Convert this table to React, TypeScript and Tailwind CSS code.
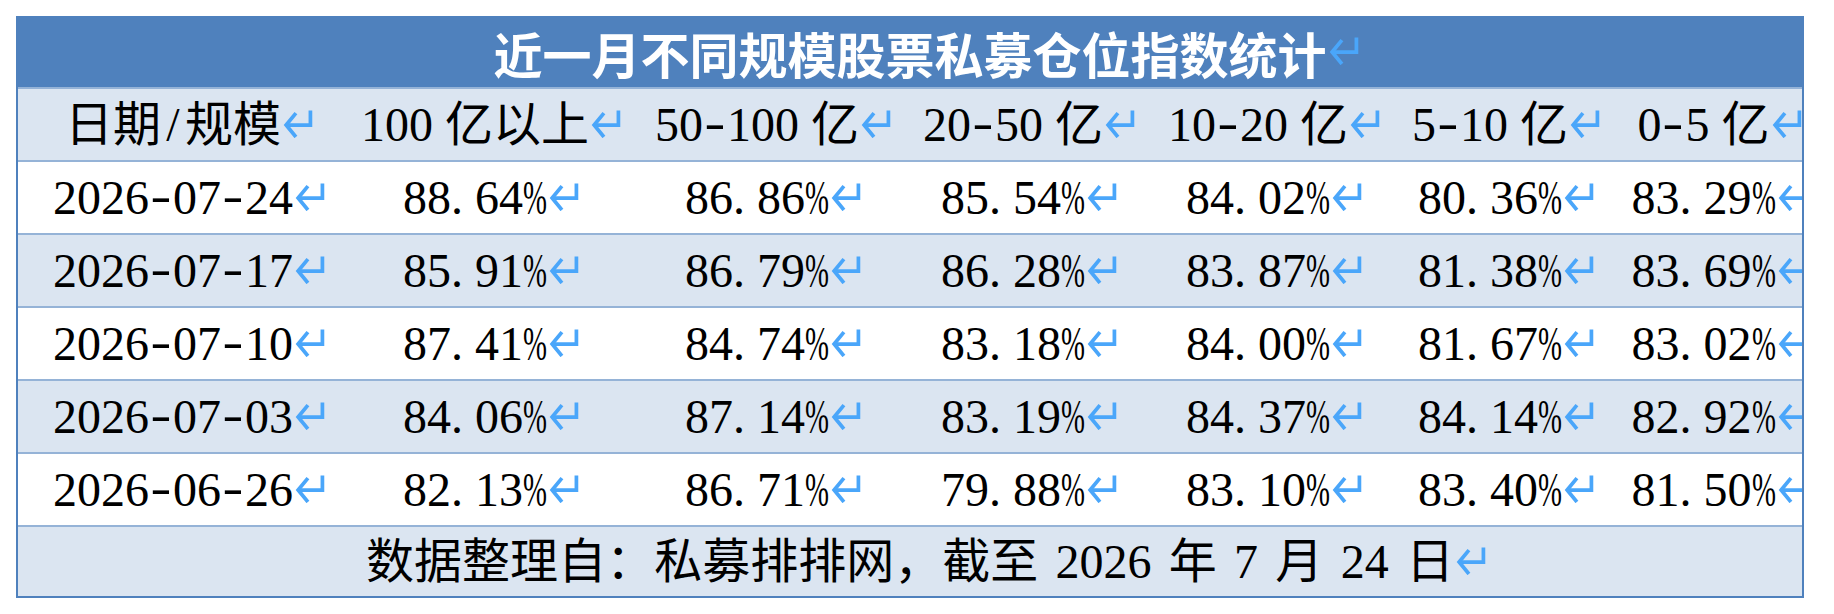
import type { ReactNode } from 'react'

const HEADERS: [string, string][] = [
  ['100', '亿以上'],
  ['50-100', '亿'],
  ['20-50', '亿'],
  ['10-20', '亿'],
  ['5-10', '亿'],
  ['0-5', '亿'],
]

const ROWS = [
  ['2026-07-24', '88.64%', '86.86%', '85.54%', '84.02%', '80.36%', '83.29%'],
  ['2026-07-17', '85.91%', '86.79%', '86.28%', '83.87%', '81.38%', '83.69%'],
  ['2026-07-10', '87.41%', '84.74%', '83.18%', '84.00%', '81.67%', '83.02%'],
  ['2026-07-03', '84.06%', '87.14%', '83.19%', '84.37%', '84.14%', '82.92%'],
  ['2026-06-26', '82.13%', '86.71%', '79.88%', '83.10%', '83.40%', '81.50%'],
]

// Word paragraph mark
function Ret() {
  return (
    <svg
      viewBox="0 0 29 28"
      fill="none"
      stroke="#4aa6fa"
      strokeWidth={3.6}
      className="absolute left-full top-[8px] ml-[2px] h-[29px] w-[30px]"
    >
      <path d="M26.5 1.5v14H3.5" />
      <path d="M12.5 4 3 15.5 12.5 27" />
    </svg>
  )
}

function Num({ text }: { text: string }) {
  return (
    <>
      {text.split('').map((c, i) => {
        if (c === '.') return <span key={i} className="inline-block w-[0.5em]">.</span>
        if (c === '%')
          return (
            <span key={i} className="inline-block w-[0.5em]">
              <span className="inline-block origin-left scale-x-[0.6]">%</span>
            </span>
          )
        if (c === '-')
          return (
            <span key={i} className="inline-block w-[0.5em] text-center">
              <span className="inline-block -translate-y-[2px] scale-x-[1.3]">-</span>
            </span>
          )
        if (c === '/') return <span key={i} className="inline-block w-[0.5em] text-center">/</span>
        if (c === ' ') return <span key={i} className="inline-block w-[0.36em]" />
        return <span key={i}>{c}</span>
      })}
    </>
  )
}

function Cell({ children, last }: { children: ReactNode; last?: boolean }) {
  return (
    <div className={last ? 'flex items-center justify-center pl-[7px]' : 'flex items-center justify-center'}>
      <span className="relative whitespace-nowrap leading-[48px]">
        {children}
        <Ret />
      </span>
    </div>
  )
}

const ROW = 'grid h-[73px] grid-cols-[310px_294px_270px_242px_248px_216px_1fr] border-t-2 border-[#95b3d7]'

export default function App() {
  return (
    <div className="min-h-[614px] bg-white pl-4 pt-4">
      <div className="w-[1788px] overflow-hidden border-2 border-[#4f81bd] font-['Liberation_Serif','Noto_Sans_CJK_SC',serif] text-[48px] text-black">
        <div className="flex h-[69px] items-center justify-center bg-[#4f81bd] text-white">
          <span className="relative whitespace-nowrap font-['Noto_Sans_CJK_SC',sans-serif] text-[49px] font-bold leading-[49px]">
            近一月不同规模股票私募仓位指数统计
            <Ret />
          </span>
        </div>

        <div className={`${ROW} bg-[#dbe5f1]`}>
          <Cell>
            <Num text="日期/规模" />
          </Cell>
          {HEADERS.map(([n, unit], i) => (
            <Cell key={n} last={i === HEADERS.length - 1}>
              <Num text={n} />
              <span className="ml-3">{unit}</span>
            </Cell>
          ))}
        </div>

        {ROWS.map((row, r) => (
          <div key={row[0]} className={`${ROW} ${r % 2 === 1 ? 'bg-[#dbe5f1]' : 'bg-white'}`}>
            {row.map((v, i) => (
              <Cell key={i} last={i === row.length - 1}>
                <Num text={v} />
              </Cell>
            ))}
          </div>
        ))}

        <div className="flex h-[71px] items-center justify-center border-t-2 border-[#95b3d7] bg-[#dbe5f1]">
          <span className="relative whitespace-nowrap leading-[48px]">
            <Num text="数据整理自：私募排排网，截至 2026 年 7 月 24 日" />
            <Ret />
          </span>
        </div>
      </div>
    </div>
  )
}
